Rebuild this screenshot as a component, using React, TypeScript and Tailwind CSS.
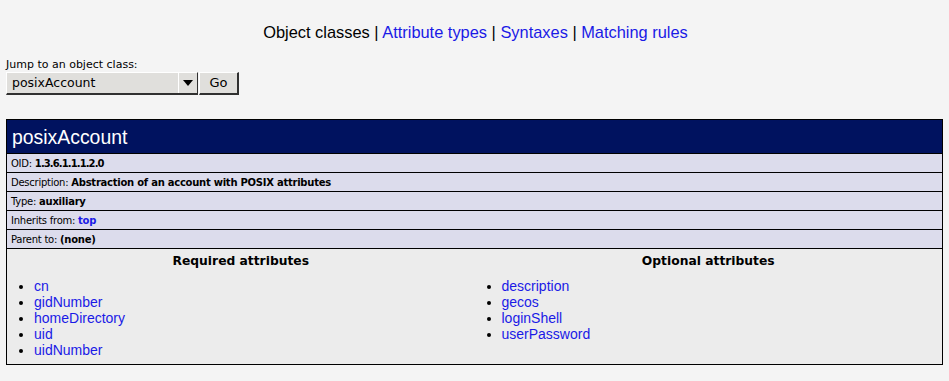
import React from 'react';

const required = ['cn', 'gidNumber', 'homeDirectory', 'uid', 'uidNumber'];
const optional = ['description', 'gecos', 'loginShell', 'userPassword'];

const InfoRow: React.FC<{ label: string; tight?: boolean; children: React.ReactNode }> = ({ label, tight, children }) => (
  <tr>
    <td colSpan={2} className="h-[19px] border border-black bg-[#dcdcec] px-[4px] py-0 font-['DejaVu_Sans',sans-serif] text-[10px] leading-[17px] tracking-[-0.25px] text-black">
      {label}: <b className={tight ? 'tracking-[-0.9px]' : ''}>{children}</b>
    </td>
  </tr>
);

const AttrList: React.FC<{ title: string; items: string[] }> = ({ title, items }) => (
  <td className="w-1/2 align-top p-0">
    <div className="mt-[4px] text-center font-['DejaVu_Sans',sans-serif] text-[12.3px] font-bold leading-[16px] text-black">{title}</div>
    <ul className="mt-[9px] mb-[6px] list-disc pl-[27px] text-[14px] leading-[16px]">
      {items.map((it) => (
        <li key={it}>
          <a href="#" className="text-[#1a1ae6]">{it}</a>
        </li>
      ))}
    </ul>
  </td>
);

export default function App() {
  return (
    <div className="min-h-[381px] w-full bg-[#f4f4f4] px-[6px] pt-[21px] font-['Liberation_Sans',Arial,sans-serif] text-black">
      {/* Nav */}
      <div className="text-center text-[16.4px] leading-[22px] pl-[2px]">
        Object classes |{' '}
        <a href="#" className="text-[#1a1ae6]">Attribute types</a> |{' '}
        <a href="#" className="text-[#1a1ae6]">Syntaxes</a> |{' '}
        <a href="#" className="text-[#1a1ae6]">Matching rules</a>
      </div>

      {/* Jump */}
      <div className="mt-[15px] font-['DejaVu_Sans',sans-serif] text-[11px] leading-[14px]">Jump to an object class:</div>
      <div className="flex h-[23px] font-['DejaVu_Sans',sans-serif]">
        <div className="flex w-[192px] border-t border-l border-t-white border-l-white border-b-2 border-r border-b-[#303030] border-r-[#303030] bg-[#e0dfdc]">
          <span className="flex-1 pl-[5px] text-[12.5px] leading-[20px]">posixAccount</span>
          <span className="flex w-[19px] items-center justify-center border-l border-l-white">
            <span className="h-0 w-0 border-x-[5px] border-t-[6px] border-x-transparent border-t-black" />
          </span>
        </div>
        <button className="ml-[1px] w-[40px] border-t border-l border-t-white border-l-white border-b-2 border-r-2 border-b-[#303030] border-r-[#303030] bg-[#e0dfdc] text-[13px] leading-[18px]">
          Go
        </button>
      </div>

      {/* Object class table */}
      <table className="mt-[24px] w-[937px] border-collapse border border-black">
        <tbody>
          <tr>
            <td colSpan={2} className="h-[34px] border border-black bg-[#00125f] px-[5px] py-0 text-[19.4px] leading-[32px] text-white">
              posixAccount
            </td>
          </tr>
          <InfoRow label="OID" tight>1.3.6.1.1.1.2.0</InfoRow>
          <InfoRow label="Description">Abstraction of an account with POSIX attributes</InfoRow>
          <InfoRow label="Type">auxiliary</InfoRow>
          <InfoRow label="Inherits from">
            <a href="#" className="text-[#1a1ae6]">top</a>
          </InfoRow>
          <InfoRow label="Parent to">(none)</InfoRow>
          <tr className="bg-[#ececec]">
            <AttrList title="Required attributes" items={required} />
            <AttrList title="Optional attributes" items={optional} />
          </tr>
        </tbody>
      </table>
    </div>
  );
}
